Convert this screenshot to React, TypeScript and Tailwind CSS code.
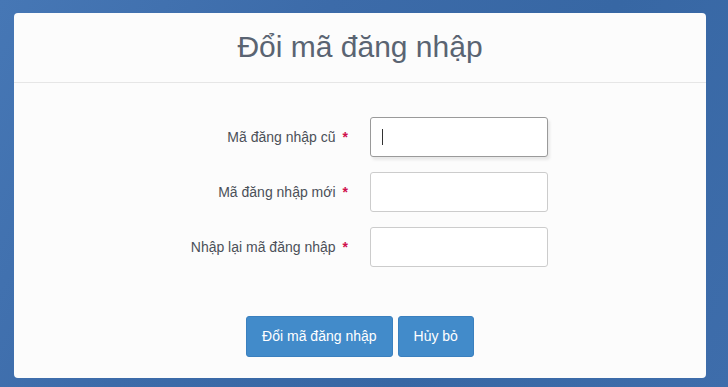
import React from "react";

function Field({ label, focused }: { label: string; focused?: boolean }) {
  return (
    <div className="flex items-center h-[40px]">
      <label className="w-[356px] text-right text-[14px] text-[#4b5058] pr-[22px] whitespace-nowrap">
        {label}
        <span className="text-[#d0104c] ml-[7px] font-bold">*</span>
      </label>
      <div className="relative w-[178px] h-[40px]">
        <input
          type="password"
          className={
            focused
              ? "w-full h-full rounded-[3px] border border-[#9a9a9a] bg-white outline-none shadow-[2px_3px_3px_rgba(0,0,0,0.08)]"
              : "w-full h-full rounded-[3px] border border-[#cccccc] bg-white outline-none"
          }
        />
        {focused && (
          <span className="absolute left-[12px] top-[12px] w-px h-[16px] bg-[#333]" />
        )}
      </div>
    </div>
  );
}

export default function App() {
  return (
    <div
      className="w-full h-[387px] overflow-hidden pt-[13px] pl-[14px] bg-[linear-gradient(120deg,#4677b5_0%,#3c6ba9_35%,#3767a4_65%,#3e6dab_100%)]"
      style={{ fontFamily: '"Liberation Sans", Arial, sans-serif' }}
    >
      <div className="w-[692px] h-[365px] rounded-[4px] bg-[#fcfcfc] flex flex-col">
        <div className="h-[70px] border-b border-[#e6e6e6] flex items-center justify-center pb-[2px]">
          <h1 className="text-[30px] leading-none text-[#5a6472]">Đổi mã đăng nhập</h1>
        </div>
        <div className="flex flex-col gap-[15px] pt-[34px]">
          <Field label="Mã đăng nhập cũ" focused />
          <Field label="Mã đăng nhập mới" />
          <Field label="Nhập lại mã đăng nhập" />
        </div>
        <div className="flex justify-center gap-[5px] mt-[49px]">
          <button className="h-[41px] px-[15px] rounded-[3px] bg-[#428bca] border border-[#3a80bf] text-white text-[14px]">
            Đổi mã đăng nhập
          </button>
          <button className="h-[41px] px-[15px] rounded-[3px] bg-[#428bca] border border-[#3a80bf] text-white text-[14px]">
            Hủy bỏ
          </button>
        </div>
      </div>
    </div>
  );
}
